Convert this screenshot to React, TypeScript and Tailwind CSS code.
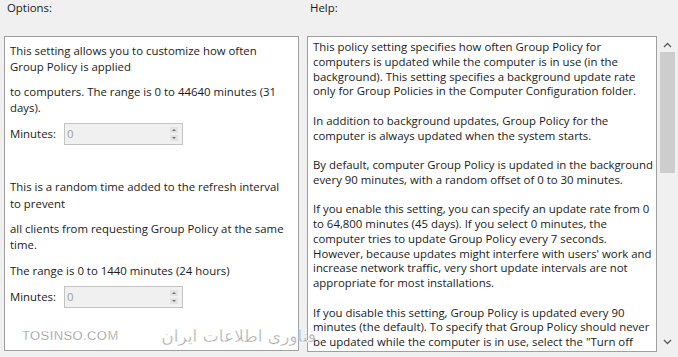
import React from "react";

const helpLines: string[] = [
  "This policy setting specifies how often Group Policy for",
  "computers is updated while the computer is in use (in the",
  "background). This setting specifies a background update rate",
  "only for Group Policies in the Computer Configuration folder.",
  "",
  "In addition to background updates, Group Policy for the",
  "computer is always updated when the system starts.",
  "",
  "By default, computer Group Policy is updated in the background",
  "every 90 minutes, with a random offset of 0 to 30 minutes.",
  "",
  "If you enable this setting, you can specify an update rate from 0",
  "to 64,800 minutes (45 days). If you select 0 minutes, the",
  "computer tries to update Group Policy every 7 seconds.",
  "However, because updates might interfere with users' work and",
  "increase network traffic, very short update intervals are not",
  "appropriate for most installations.",
  "",
  "If you disable this setting, Group Policy is updated every 90",
  "minutes (the default). To specify that Group Policy should never",
  "be updated while the computer is in use, select the \"Turn off",
];

function Spinner() {
  return (
    <div className="flex items-center h-[22px]">
      <span className="w-[54px]">Minutes:</span>
      <div className="flex h-[22px] w-[119px] border border-[#c3c3c3] bg-[#f0f0f0]">
        <span className="flex-1 pl-[2px] leading-[20px] text-[#a0a0a0]">0</span>
        <div className="flex w-[14px] flex-col items-center justify-center gap-[2px] pr-[3px]">
          <svg width="8" height="6" viewBox="0 0 8 6">
            <rect x="0" y="0" width="8" height="6" fill="#e3e3e3" />
            <path d="M2 4 L4 2 L6 4 Z" fill="#6d6d6d" />
          </svg>
          <svg width="8" height="6" viewBox="0 0 8 6">
            <rect x="0" y="0" width="8" height="6" fill="#e3e3e3" />
            <path d="M2 2 L4 4 L6 2 Z" fill="#6d6d6d" />
          </svg>
        </div>
      </div>
    </div>
  );
}

export default function App() {
  return (
    <div
      className="relative h-[357px] w-[678px] overflow-hidden bg-[#f0f0f0] text-[11.4px] text-[#1a1a1a]"
      style={{ fontFamily: '"Open Sans", "Noto Sans", sans-serif' }}
    >
      <div className="flex h-[36px]">
        <div className="w-[310px] pl-[7px] leading-[16px]">Options:</div>
        <div className="leading-[16px]">Help:</div>
      </div>
      <div className="flex">
        <div className="ml-[4px] h-[315px] w-[295px] border border-[#a0a0a0] bg-white pl-[5px] pt-[6px] leading-[16px] whitespace-nowrap">
          <div>This setting allows you to customize how often</div>
          <div>Group Policy is applied</div>
          <div className="mt-[9px]">to computers. The range is 0 to 44640 minutes (31</div>
          <div>days).</div>
          <div className="mt-[7px]">
            <Spinner />
          </div>
          <div className="mt-[34px]">This is a random time added to the refresh interval</div>
          <div className="mt-[1px]">to prevent</div>
          <div className="mt-[9px]">all clients from requesting Group Policy at the same</div>
          <div>time.</div>
          <div className="mt-[10px]">The range is 0 to 1440 minutes (24 hours)</div>
          <div className="mt-[7px]">
            <Spinner />
          </div>
        </div>
        <div className="ml-[8px] h-[316px] w-[350px] overflow-hidden border border-[#a0a0a0] bg-white pl-[5px] pt-[3px] leading-[14.75px] whitespace-nowrap">
          {helpLines.map((l, i) => (
            <div key={i} className="h-[14.75px]">
              {l}
            </div>
          ))}
        </div>
        <div className="flex h-[316px] w-[21px] flex-col items-center">
          <svg width="9" height="6" viewBox="0 0 9 6" className="mt-[6px] ml-[-1px]">
            <path d="M1 5 L4.5 1.5 L8 5" fill="none" stroke="#606060" strokeWidth="1.4" />
          </svg>
          <div className="mt-[4px] ml-[-1px] h-[121px] w-[15px] bg-[#cdcdcd]" />
          <div className="flex-1" />
          <svg width="9" height="6" viewBox="0 0 9 6" className="mb-[7px] ml-[-1px]">
            <path d="M1 1 L4.5 4.5 L8 1" fill="none" stroke="#606060" strokeWidth="1.4" />
          </svg>
        </div>
      </div>

      {/* watermark */}
      <div
        className="absolute left-[22px] top-[327px] text-[13px] leading-[18px] tracking-[0.4px] text-[#777777]"
        style={{ fontFamily: '"Liberation Sans", sans-serif', WebkitTextStroke: "0.4px #ffffff" }}
      >
        TOSINSO.COM
      </div>
      <div
        dir="rtl"
        className="absolute left-[150px] top-[325px] w-[166px] text-[17px] leading-[22px] text-[#a8a8a8]"
        style={{ fontFamily: '"DejaVu Sans", sans-serif', WebkitTextStroke: "0.4px #ffffff" }}
      >
        <span className="whitespace-nowrap">فناوری اطلاعات ایران</span>
      </div>
    </div>
  );
}
